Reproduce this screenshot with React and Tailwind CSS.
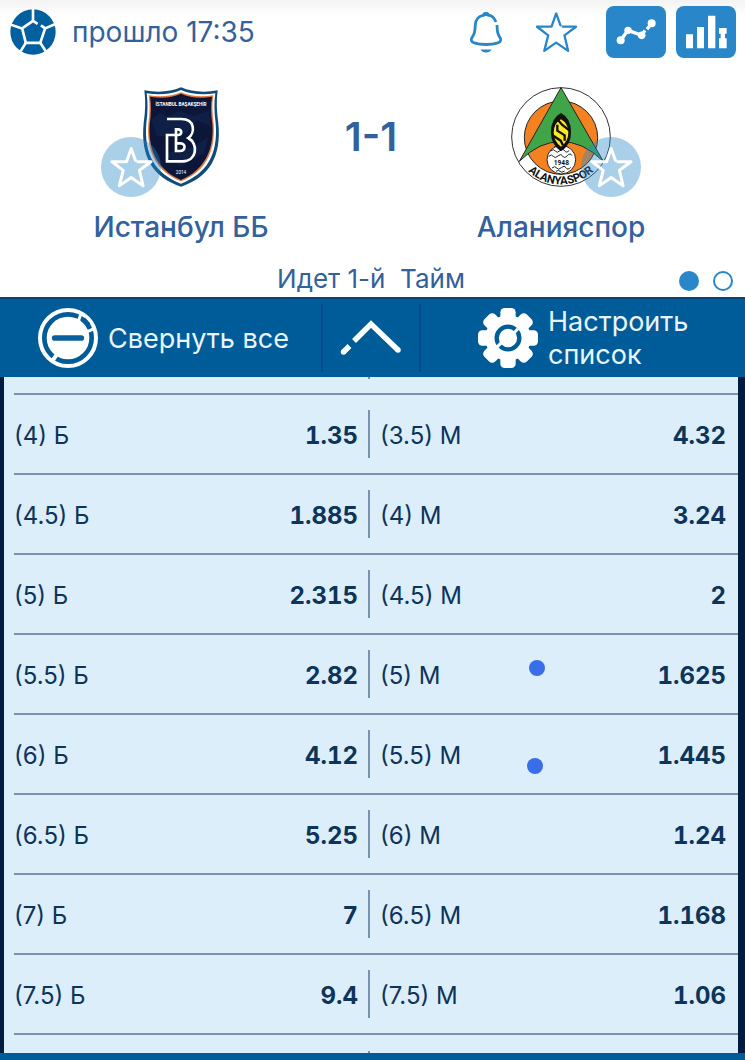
const rows = [
  ['(4) Б', '1.35', '(3.5) М', '4.32'],
  ['(4.5) Б', '1.885', '(4) М', '3.24'],
  ['(5) Б', '2.315', '(4.5) М', '2'],
  ['(5.5) Б', '2.82', '(5) М', '1.625', 'left-[161px] top-[25px]'],
  ['(6) Б', '4.12', '(5.5) М', '1.445', 'left-[159px] top-[43px]'],
  ['(6.5) Б', '5.25', '(6) М', '1.24'],
  ['(7) Б', '7', '(6.5) М', '1.168'],
  ['(7.5) Б', '9.4', '(7.5) М', '1.06'],
];

function BallIcon() {
  return (
    <svg viewBox="30 26 140 140" className="size-[46px] shrink-0" aria-hidden="true">
      <circle cx="100" cy="96" r="69" fill="#0260a0" />
      <g fill="none" stroke="#fff" strokeWidth="8">
        <path d="M114 71 L100 62 L67 85 L78 129 H122 L137 85 L124 76" />
        <path d="M100 62V24M67 85L30 73M78 129L58 162M122 129L144 162M137 85L172 70" />
      </g>
    </svg>
  );
}

function BellIcon() {
  return (
    <svg viewBox="0 0 34 42" className="h-[42px] w-[34px]" aria-hidden="true">
      <path
        d="M27 11C25 6 21.500 4.500 19.500 4.200Q19 2.500 17 2.500T14.500 4.200C8.500 5.500 6.500 9.500 6.300 14C6 21 5.500 23 2.500 27.500C.5 32 9 33.500 17 33.500S33.500 32 31.500 27.500C28.500 23 28.200 21 28 14"
        fill="none" stroke="#2986c9" strokeWidth="2.800"
      />
      <path d="M13.500 3.600Q14.500 1 17 1T20.500 3.600L25 7Q17 3 9 7Z" fill="#2986c9" />
      <path d="M11.500 38.500H22.500Q21 41.500 17 41.500T11.500 38.500Z" fill="#2986c9" />
    </svg>
  );
}

function StarIcon({ className, weight = 7 }) {
  return (
    <svg viewBox="254 33 130 126" className={className} aria-hidden="true">
      <path
        d="M331 76L318 40L304 80H260L294 106L282 153L318 128L354 153L343 106L378 80H338"
        fill="none" stroke="currentColor" strokeWidth={weight} strokeLinejoin="round" strokeLinecap="round"
      />
    </svg>
  );
}

function TrendIcon() {
  return (
    <svg viewBox="468 18 180 156" className="h-[52px] w-[60px]" aria-hidden="true">
      <g fill="#fff">
        <circle cx="512" cy="121" r="12" />
        <circle cx="534" cy="91" r="11" />
        <circle cx="575" cy="106" r="11.500" />
        <circle cx="605" cy="70" r="12" />
      </g>
      <path d="M512 121L534 91L575 106L585 91M591 88L605 70" fill="none" stroke="#fff" strokeWidth="10" />
    </svg>
  );
}

function BarsIcon() {
  return (
    <svg viewBox="678 18 180 156" className="h-[52px] w-[60px]" aria-hidden="true">
      <path
        d="M708 103h21v42h-21zM741 81h21v64h-21zM774 47h22v98h-22zM807 84h23v17h-5v14h5v30h-23v-30h5v-14h-5z"
        fill="#fff"
      />
    </svg>
  );
}

function BasaksehirCrest() {
  return (
    <svg viewBox="153 51 300 300" className="size-[100px]" role="img" aria-label="Истанбул ББ">
      <path d="M193 61Q255 72 303 52Q351 72 413 61Q407 105 415 160C425 260 388 322 303 350C218 322 181 260 191 160Q199 105 193 61Z" fill="#0e4c7d" />
      <path d="M200 70Q258 79 303 60Q348 79 406 70Q400 110 407 160C415 254 380 312 303 341C226 312 191 254 199 160Q206 110 200 70Z" fill="#fff" />
      <path d="M206 76Q260 85 303 67Q346 85 400 76Q394 112 401 162C407 248 374 306 303 334C232 306 199 248 205 162Q212 112 206 76Z" fill="#e2763f" />
      <path d="M210 80Q262 89 303 71Q344 89 396 80Q390 114 397 163C403 244 370 302 303 330C236 302 203 244 209 163Q216 114 210 80Z" fill="#0b1638" />
      <path d="M214 150L240 128L262 140L300 122L340 138L388 120L392 170L350 150L320 190L230 200ZM220 220L260 250L340 230L385 200L372 250L300 290Z" fill="#172a59" opacity=".45" />
      <text x="303" y="109" textAnchor="middle" fontSize="14" fontWeight="700" fill="#fff" className="font-['Roboto',sans-serif]">İSTANBUL BAŞAKŞEHİR</text>
      <path
        d="M261 147H304C347 147 345 190 325 204C357 222 350 274 308 274H261V195H293C307 195 307 178 294 178H288V243H299C318 243 318 220 302 220H290"
        fill="none" stroke="#fff" strokeWidth="8"
      />
      <text x="303" y="311" textAnchor="middle" fontSize="14" fill="#fff" className="font-['Roboto',sans-serif]">2014</text>
    </svg>
  );
}

function AlanyasporCrest() {
  return (
    <svg viewBox="153 51 300 300" className="size-[100px]" role="img" aria-label="Аланияспор">
      <defs>
        <path id="crest-arc" d="M161 201A142 142 0 0 0 445 201" />
      </defs>
      <circle cx="303" cy="201" r="148" fill="#fff" stroke="#333" strokeWidth="3" />
      <circle cx="303" cy="203" r="110" fill="#f58220" stroke="#222" strokeWidth="3" />
      <path d="M303 53L178 274Q240 212 303 216Q366 212 430 274Z" fill="#3fa548" stroke="#222" strokeWidth="3" />
      <circle cx="304" cy="269" r="43" fill="#fff" stroke="#222" strokeWidth="3" />
      <path d="M272 243q9-8 14 0t14-1 14 0 14-1M266 259q9-8 14 0t14-1 14 0 14-1 14 0M276 294q9-8 14 0t14-1 14 0 14-1M288 304q8-6 12 0t14-1M282 232q8-6 12 0t14-1 14 0" fill="none" stroke="#222" strokeWidth="3" />
      <text x="304" y="285" textAnchor="middle" fontSize="20" fontWeight="700" fill="#111" className="font-['Liberation_Sans_Narrow','Roboto',sans-serif]">1948</text>
      <path d="M303 129Q334 145 333 187Q334 224 303 244Q272 224 273 187Q272 145 303 129Z" fill="#111" />
      <path d="M303 148Q324 160 325 187Q325 215 303 230Q281 215 281 187Q282 160 303 148Z" fill="#fbe72a" />
      <path d="M328 181L306 164L294 150M292 164V182L314 196V212M280 197L302 212L309 226" fill="none" stroke="#111" strokeWidth="7" />
      <text fontSize="34" fontWeight="700" fill="#111" className="font-['Liberation_Sans_Narrow','Roboto',sans-serif]">
        <textPath href="#crest-arc" startOffset="50%" textAnchor="middle">ALANYASPOR</textPath>
      </text>
    </svg>
  );
}

function CollapseIcon() {
  return (
    <svg viewBox="114 51 180 180" className="size-[60px] shrink-0" aria-hidden="true">
      <circle cx="204" cy="141" r="84" fill="none" stroke="#fff" strokeWidth="12" />
      <circle cx="204" cy="141" r="64" fill="#fff" />
      <path d="M158 209L172 188" stroke="#fff" strokeWidth="12" />
      <path d="M250 84L266 101" stroke="#005c99" strokeWidth="13" />
      <path d="M244 66L234 92L262 122L284 112" fill="none" stroke="#fff" strokeWidth="9" />
      <path d="M164 141H244" stroke="#0a609f" strokeWidth="17" strokeLinecap="round" />
    </svg>
  );
}

function ChevronIcon() {
  return (
    <svg viewBox="0 0 62 36" className="h-[36px] w-[62px]" aria-hidden="true">
      <path d="M3.500 32L9.500 26M14 21L31 4L58 30" fill="none" stroke="#fff" strokeWidth="5.500" />
      <circle cx="3.500" cy="32" r="2.750" fill="#fff" />
      <circle cx="58" cy="30" r="2.750" fill="#fff" />
    </svg>
  );
}

function GearIcon() {
  return (
    <svg viewBox="-90 -90 180 180" className="size-[60px] shrink-0" aria-hidden="true">
      <g fill="#fff">
        <circle r="68" />
        <rect x="-23" y="-90" width="46" height="180" rx="13" />
        <rect x="-23" y="-90" width="46" height="180" rx="13" transform="rotate(45)" />
        <rect x="-23" y="-90" width="46" height="180" rx="13" transform="rotate(90)" />
        <rect x="-23" y="-90" width="46" height="180" rx="13" transform="rotate(135)" />
      </g>
      <circle r="34" fill="none" stroke="#005c99" strokeWidth="13" />
      <path d="M-34 28L-16 10M17 -14L30 -28" stroke="#fff" strokeWidth="9" />
    </svg>
  );
}

function Team({ name, side, children }) {
  return (
    <div className="flex flex-col items-center">
      <div className="relative">
        {children}
        <button
          type="button"
          aria-label={`В избранное: ${name}`}
          className={`absolute top-[50px] flex size-[60px] items-center justify-center rounded-full bg-[#2986c9]/40 text-white ${side}`}
        >
          <StarIcon className="h-[42px] w-[43px]" weight={9} />
        </button>
      </div>
      <h2 className="mt-6 text-[28px] leading-8 font-medium">{name}</h2>
    </div>
  );
}

export default function App() {
  return (
    <div className="flex min-h-screen flex-col bg-[#005c99] font-['Inter','Noto_Sans',sans-serif]">
      <header className="bg-white bg-linear-to-b from-[#f3f3f3] to-white to-[16px] text-[#33619d]">
        <div className="flex items-start justify-between pt-[6px] pr-[9px] pl-[10px]">
          <div className="flex h-[52px] items-center gap-4">
            <BallIcon />
            <span className="text-[28px] leading-8">прошло 17:35</span>
          </div>
          <div className="flex gap-[10px] text-[#2986c9]">
            <button type="button" aria-label="Уведомления" className="flex h-[52px] w-[60px] items-center justify-center">
              <BellIcon />
            </button>
            <button type="button" aria-label="Избранное" className="mr-[10px] flex h-[52px] w-[60px] items-center justify-center">
              <StarIcon className="h-[42px] w-[43px]" />
            </button>
            <button type="button" aria-label="График" className="rounded-lg bg-[#2986c9]">
              <TrendIcon />
            </button>
            <button type="button" aria-label="Статистика" className="rounded-lg bg-[#2986c9]">
              <BarsIcon />
            </button>
          </div>
        </div>

        <div className="grid grid-cols-[1fr_64px_1fr] pt-[29px] pr-[26px] pl-[23px]">
          <Team name="Истанбул ББ" side="-left-[30px]">
            <BasaksehirCrest />
          </Team>
          <div className="flex h-[100px] items-center justify-center text-[40px] leading-10 font-semibold whitespace-nowrap">1-1</div>
          <Team name="Аланияспор" side="-right-[30px]">
            <AlanyasporCrest />
          </Team>
        </div>

        <div className="mt-5 grid grid-cols-[1fr_auto_1fr] items-center pr-3 pb-[2px] pl-[9px]">
          <span className="col-start-2 text-[26px] leading-8 whitespace-pre">Идет 1-й  Тайм</span>
          <div className="flex justify-end gap-[14px] pt-1">
            <button type="button" aria-label="Страница 1" className="size-5 rounded-full bg-[#2986c9]" />
            <button type="button" aria-label="Страница 2" className="size-5 rounded-full border-2 border-[#2986c9]" />
          </div>
        </div>
      </header>

      <nav className="grid grid-cols-[321fr_100fr_324fr] items-center border-t-2 border-[#064377] bg-[#005c99] text-[27px] leading-[33px] text-[#e9f5fc]">
        <button type="button" className="flex h-[78px] items-center gap-[10px] pl-[38px] text-left">
          <CollapseIcon />
          Свернуть все
        </button>
        <button type="button" aria-label="Вверх" className="flex h-[68px] items-center justify-center border-x-2 border-[#044b8a]">
          <ChevronIcon />
        </button>
        <button type="button" className="flex h-[78px] items-center gap-[10px] pl-[57px] text-left">
          <GearIcon />
          <span>
            Настроить
            <br />
            список
          </span>
        </button>
      </nav>

      <main className="border-r-[7px] border-l-4 border-[#001c40] bg-[#dceefa] pl-[10px] text-[#0d3459]">
        <div className="grid h-[18px] grid-cols-[354fr_370fr] border-b-2 border-[#7892b0]">
          <div className="col-start-2 size-[2px] bg-[#7892b0]" />
        </div>
        <table className="w-full table-fixed border-separate border-spacing-0 text-2xl">
          <colgroup>
            <col className="w-[22%]" />
            <col className="w-[26.900%]" />
            <col className="w-[28%]" />
            <col className="w-[23.100%]" />
          </colgroup>
          <tbody>
            {rows.map(([over, overOdds, under, underOdds, dot]) => (
              <tr key={over} className="h-20">
                <td className="border-b-2 border-[#7892b0] p-0 pt-1">{over}</td>
                <td className="border-b-2 border-[#7892b0] p-0 pt-1 pr-[10px] text-right font-bold tabular-nums">{overOdds}</td>
                <td className="relative border-b-2 border-[#7892b0] p-0">
                  <div className="flex h-12 items-center border-l-2 border-[#7892b0] pt-1 pl-[10px]">{under}</div>
                  {dot && <span className={`absolute size-4 rounded-full bg-[#3a6ee8] ${dot}`} />}
                </td>
                <td className="border-b-2 border-[#7892b0] p-0 pt-1 pr-3 text-right font-bold tabular-nums">{underOdds}</td>
              </tr>
            ))}
          </tbody>
        </table>
        <div className="grid h-[18px] grid-cols-[354fr_370fr] items-end">
          <div className="col-start-2 size-[2px] bg-[#7892b0]" />
        </div>
      </main>
      <footer className="h-[7px] bg-[#005c99]" />
    </div>
  );
}
